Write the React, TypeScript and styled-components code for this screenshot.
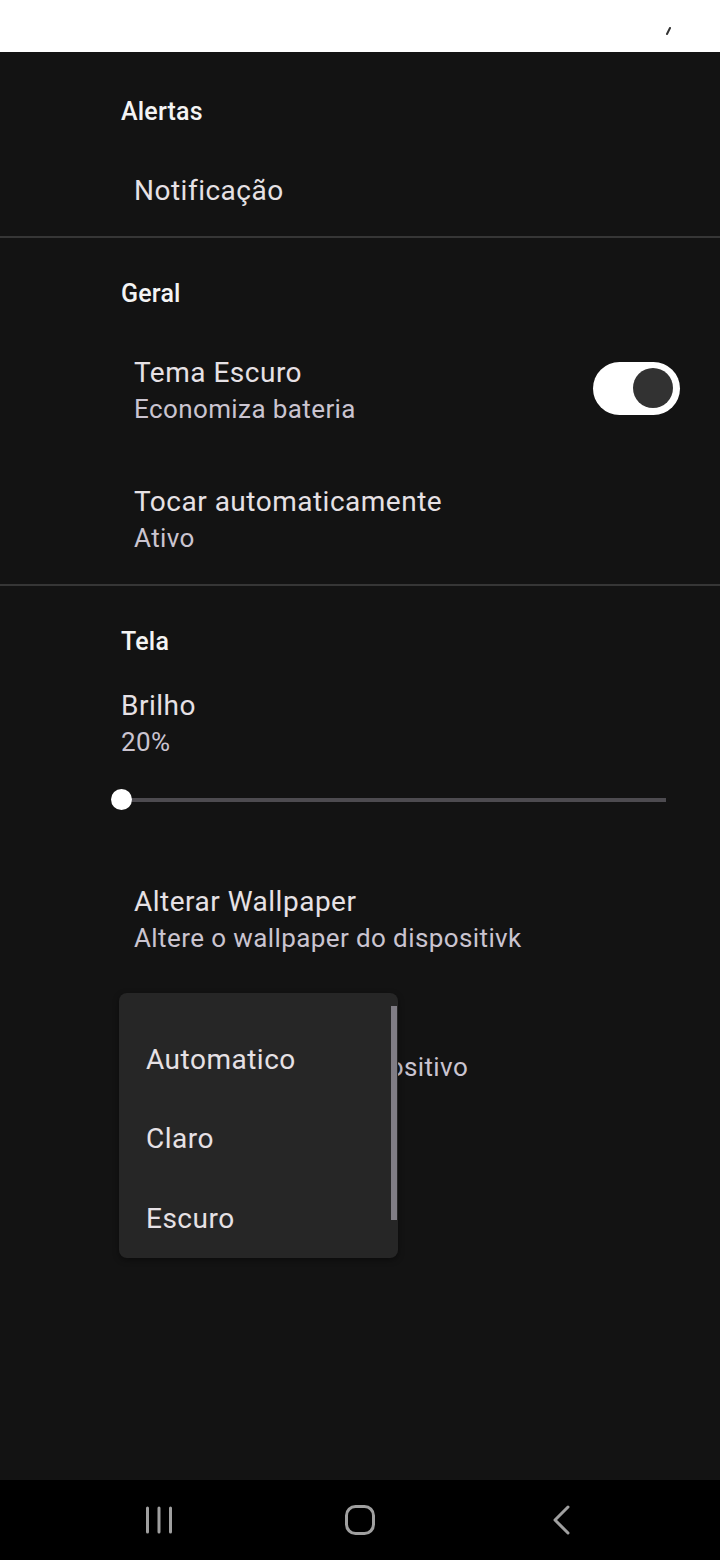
import React from "react";
import styled, { createGlobalStyle } from "styled-components";

const Global = createGlobalStyle`
  html, body { margin: 0; padding: 0; background: #131313; }
  body { font-family: Roboto, "Noto Sans", sans-serif; -webkit-font-smoothing: antialiased; }
  * { box-sizing: border-box; }
`;

const Screen = styled.div`
  width: 720px;
  height: 1560px;
  display: flex;
  flex-direction: column;
  background: #131313;
  position: relative;
  overflow: hidden;
`;

const StatusBar = styled.div`
  height: 52px;
  background: #ffffff;
  display: flex;
  justify-content: flex-end;
  padding: 27px 49px 0 0;
`;

const Content = styled.div`
  flex: 1;
  padding-top: 4px;
  display: flex;
  flex-direction: column;
`;

const Section = styled.section`
  display: flex;
  flex-direction: column;
`;

const Divider = styled.div`
  height: 2px;
  background: #363636;
`;

const SectionHeader = styled.div`
  padding: 40px 121px 16px;
  font-size: 25px;
  line-height: 32px;
  font-weight: 500;
  letter-spacing: 0.2px;
  color: #f4f4f4;
`;

const Item = styled.div`
  display: flex;
  align-items: center;
  padding: 28px 40px 27px 134px;
`;

const ItemText = styled.div`
  flex: 1;
  display: flex;
  flex-direction: column;
`;

const Title = styled.div`
  font-size: 28px;
  line-height: 37px;
  letter-spacing: 0.5px;
  color: #e6e1e5;
`;

const Subtitle = styled.div`
  font-size: 26px;
  line-height: 37px;
  letter-spacing: 0.4px;
  color: #cac4d0;
`;

const Switch = styled.div<{ $on: boolean }>`
  width: 87px;
  height: 53px;
  border-radius: 27px;
  background: ${(p) => (p.$on ? "#ffffff" : "#444")};
  display: flex;
  align-items: center;
  justify-content: ${(p) => (p.$on ? "flex-end" : "flex-start")};
  padding: 0 7px;
  margin-top: -6px;
`;

const Knob = styled.div`
  width: 40px;
  height: 40px;
  border-radius: 50%;
  background: #323232;
`;

const SliderBlock = styled.div`
  padding: 13px 54px 0 121px;
  display: flex;
  flex-direction: column;
`;

const SliderTrack = styled.div`
  margin: 19px 0 35px -10px;
  height: 40px;
  display: flex;
  align-items: center;
  position: relative;
`;

const TrackLine = styled.div`
  flex: 1;
  height: 4px;
  background: #4d4b50;
  margin-left: 10px;
`;

const Thumb = styled.div`
  position: absolute;
  top: 9px;
  width: 21px;
  height: 21px;
  border-radius: 50%;
  background: #ffffff;
`;

const Menu = styled.div`
  position: absolute;
  left: 119px;
  top: 993px;
  width: 279px;
  height: 265px;
  background: #262626;
  border-radius: 8px;
  padding-top: 27px;
  display: flex;
  flex-direction: column;
  box-shadow: 0 2px 6px rgba(0, 0, 0, 0.4);
`;

const MenuItem = styled.div`
  height: 80px;
  display: flex;
  align-items: center;
  padding-left: 27px;
  font-size: 28px;
  letter-spacing: 0.5px;
  color: #e6e1e5;
`;

const Scrollbar = styled.div`
  position: absolute;
  right: 1px;
  top: 13px;
  width: 6px;
  height: 214px;
  background: #807d85;
`;

const NavBar = styled.div`
  height: 80px;
  background: #000000;
  display: flex;
  justify-content: center;
  align-items: center;
  gap: 161px;
`;

const NavIcon = styled.div`
  width: 40px;
  height: 40px;
  display: flex;
  align-items: center;
  justify-content: center;
`;

export default function App() {
  return (
    <>
      <Global />
      <Screen>
        <StatusBar>
          <svg width="6" height="8" viewBox="0 0 6 8">
            <path d="M5 1 L2 7" stroke="#333" strokeWidth="2" strokeLinecap="round" />
          </svg>
        </StatusBar>
        <Content>
          <Section>
            <SectionHeader>Alertas</SectionHeader>
            <Item>
              <ItemText>
                <Title>Notificação</Title>
              </ItemText>
            </Item>
          </Section>
          <Divider />
          <Section>
            <SectionHeader>Geral</SectionHeader>
            <Item>
              <ItemText>
                <Title>Tema Escuro</Title>
                <Subtitle>Economiza bateria</Subtitle>
              </ItemText>
              <Switch $on>
                <Knob />
              </Switch>
            </Item>
            <Item>
              <ItemText>
                <Title>Tocar automaticamente</Title>
                <Subtitle>Ativo</Subtitle>
              </ItemText>
            </Item>
          </Section>
          <Divider />
          <Section>
            <SectionHeader>Tela</SectionHeader>
            <SliderBlock>
              <Title>Brilho</Title>
              <Subtitle>20%</Subtitle>
              <SliderTrack>
                <TrackLine />
                <Thumb style={{ left: "0%" }} />
              </SliderTrack>
            </SliderBlock>
            <Item>
              <ItemText>
                <Title>Alterar Wallpaper</Title>
                <Subtitle>Altere o wallpaper do dispositivk</Subtitle>
              </ItemText>
            </Item>
            <Item>
              <ItemText>
                <Title>Tema</Title>
                <Subtitle>Altere o tema do dispositivo</Subtitle>
              </ItemText>
            </Item>
          </Section>
        </Content>
        <NavBar>
          <NavIcon>
            <svg width="28" height="28" viewBox="0 0 28 28">
              <g stroke="#a0a0a0" strokeWidth="3" strokeLinecap="round">
                <path d="M2.5 2 V26" />
                <path d="M14 2 V26" />
                <path d="M25.5 2 V26" />
              </g>
            </svg>
          </NavIcon>
          <NavIcon>
            <svg width="30" height="30" viewBox="0 0 30 30">
              <rect x="1.5" y="1.5" width="27" height="27" rx="9" fill="none" stroke="#a0a0a0" strokeWidth="3" />
            </svg>
          </NavIcon>
          <NavIcon>
            <svg width="20" height="30" viewBox="0 0 20 30">
              <path d="M17 2 L4 15 L17 28" fill="none" stroke="#a0a0a0" strokeWidth="3" strokeLinecap="round" strokeLinejoin="round" />
            </svg>
          </NavIcon>
        </NavBar>
        <Menu>
          <MenuItem>Automatico</MenuItem>
          <MenuItem>Claro</MenuItem>
          <MenuItem>Escuro</MenuItem>
          <Scrollbar />
        </Menu>
      </Screen>
    </>
  );
}
